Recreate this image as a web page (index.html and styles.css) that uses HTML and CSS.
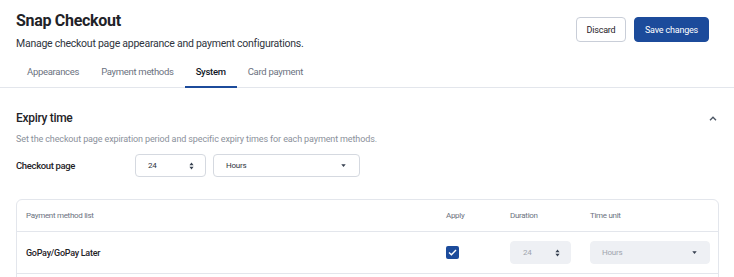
FILE: index.html
```html
<!DOCTYPE html>
<html lang="en">
<head>
    <meta charset="UTF-8">
    <title>Snap Checkout</title>
    <link rel="stylesheet" href="styles.css">
</head>
<body>
    <div class="top">
        <div class="head">
            <div>
                <h1>Snap Checkout</h1>
                <p class="subtitle">Manage checkout page appearance and payment configurations.</p>
            </div>
            <div class="actions">
                <button type="button" class="btn btn-outline">Discard</button>
                <button type="button" class="btn btn-primary">Save changes</button>
            </div>
        </div>
        <div class="tabs">
            <div class="tab">Appearances</div>
            <div class="tab">Payment methods</div>
            <div class="tab active">System</div>
            <div class="tab">Card payment</div>
        </div>
    </div>

    <div class="section">
        <div class="section-head">
            <h2>Expiry time</h2>
            <svg class="chevron" width="8" height="5" viewBox="0 0 8 5"><path d="M1 4.2 L4 1.2 L7 4.2" fill="none" stroke="#4b5563" stroke-width="1.3"/></svg>
        </div>
        <p class="desc">Set the checkout page expiration period and specific expiry times for each payment methods.</p>

        <div class="field">
            <div class="label">Checkout page</div>
            <div class="ctrl num">
                <span>24</span>
                <svg width="5" height="8" viewBox="0 0 5 8"><path d="M2.5 0.5 L4.6 3.2 H0.4 Z M2.5 7.5 L4.6 4.8 H0.4 Z" fill="#374151"/></svg>
            </div>
            <div class="ctrl sel">
                <span>Hours</span>
                <svg width="5" height="3" viewBox="0 0 5 3"><path d="M0.3 0.2 H4.7 L2.5 2.9 Z" fill="#374151"/></svg>
            </div>
        </div>

        <div class="table">
            <div class="row thead">
                <div>Payment method list</div>
                <div>Apply</div>
                <div>Duration</div>
                <div>Time unit</div>
            </div>
            <div class="row">
                <div class="name">GoPay/GoPay Later</div>
                <div><span class="check"><svg width="9" height="7" viewBox="0 0 9 7"><path d="M1 3.6 L3.4 5.8 L8 1" fill="none" stroke="#fff" stroke-width="1.4"/></svg></span></div>
                <div>
                    <div class="ctrl num off">
                        <span>24</span>
                        <svg width="5" height="8" viewBox="0 0 5 8"><path d="M2.5 0.5 L4.6 3.2 H0.4 Z M2.5 7.5 L4.6 4.8 H0.4 Z" fill="#374151"/></svg>
                    </div>
                </div>
                <div>
                    <div class="ctrl sel off">
                        <span>Hours</span>
                        <svg width="5" height="3" viewBox="0 0 5 3"><path d="M0.3 0.2 H4.7 L2.5 2.9 Z" fill="#374151"/></svg>
                    </div>
                </div>
            </div>
            <div class="row"></div>
        </div>
    </div>
</body>
</html>
```

FILE: styles.css
```css
* {
    box-sizing: border-box;
}

body {
    margin: 0;
    font-family: Roboto, "Liberation Sans", sans-serif;
    color: #1f2328;
    background: #fff;
}

.top {
    border-bottom: 1px solid #e3e6ec;
}

.head {
    display: flex;
    justify-content: space-between;
    padding: 10px 25px 0 16px;
}

h1 {
    margin: 0;
    font-size: 16px;
    line-height: 21px;
    font-weight: 700;
    letter-spacing: -0.3px;
    color: #1f2328;
}

.subtitle {
    margin: 6px 0 0;
    font-size: 10.5px;
    line-height: 13px;
    letter-spacing: -0.25px;
    color: #2f3540;
}

.actions {
    display: flex;
    gap: 8px;
    padding-top: 7px;
}

.btn {
    height: 25px;
    border-radius: 4px;
    font-family: inherit;
    font-size: 9px;
    letter-spacing: -0.2px;
    padding: 0;
    cursor: pointer;
}

.btn-outline {
    width: 50px;
    background: #fff;
    border: 1px solid #c9ced8;
    color: #1f2328;
}

.btn-primary {
    width: 75px;
    background: #1c4b9b;
    border: 1px solid #1c4b9b;
    color: #fff;
}

.tabs {
    display: flex;
    padding: 0 0 0 16px;
    margin-top: 13px;
}

.tab {
    padding: 1px 11px 0;
    height: 25px;
    line-height: 16px;
    font-size: 9.5px;
    letter-spacing: -0.3px;
    color: #6b7280;
    border-bottom: 2px solid transparent;
    margin-bottom: -1px;
}

.tab.active {
    color: #111827;
    font-weight: 500;
    border-bottom-color: #1c4b9b;
}

.section {
    padding: 22px 15px 0 16px;
}

.section-head {
    display: flex;
    justify-content: space-between;
    align-items: center;
    padding-right: 2px;
}

h2 {
    margin: 0;
    font-size: 12px;
    line-height: 16px;
    font-weight: 500;
    letter-spacing: -0.3px;
    color: #1f2328;
}

.desc {
    margin: 7px 0 0;
    font-size: 9px;
    line-height: 12px;
    letter-spacing: -0.12px;
    color: #8b919b;
}

.field {
    display: flex;
    align-items: center;
    gap: 7px;
    margin-top: 9px;
}

.label {
    width: 112px;
    font-size: 9.5px;
    font-weight: 500;
    letter-spacing: -0.35px;
    color: #1f2328;
}

.ctrl {
    display: flex;
    align-items: center;
    justify-content: space-between;
    height: 23px;
    padding: 0 13px 0 12px;
    border: 1px solid #d5d9e0;
    border-radius: 4px;
    font-size: 8px;
    letter-spacing: -0.2px;
    color: #2f3540;
    background: #fff;
}

.num {
    width: 71px;
    padding-right: 11px;
}

.sel {
    width: 147px;
}

.ctrl.off {
    border-color: #eef0f4;
    background: #eef0f4;
    color: #a0a5ae;
}

.table .num.off {
    width: 61px;
    padding: 0 10px 0 12px;
}

.table .sel.off {
    width: 120px;
    padding: 0 12px 0 11px;
}

.table {
    margin-top: 22px;
    border: 1px solid #e3e6ec;
    border-radius: 6px;
}

.row {
    display: grid;
    grid-template-columns: 420px 64px 80px 120px;
    align-items: center;
    height: 42px;
    padding: 0 9px 0 9px;
    border-bottom: 1px solid #e3e6ec;
}

.row.thead {
    height: 32px;
    font-size: 8px;
    letter-spacing: -0.3px;
    color: #6b7280;
}

.name {
    font-size: 9px;
    font-weight: 500;
    letter-spacing: -0.27px;
    color: #1f2328;
}

.check {
    display: flex;
    align-items: center;
    justify-content: center;
    width: 13px;
    height: 13px;
    border-radius: 2px;
    background: #1c4b9b;
}
```
